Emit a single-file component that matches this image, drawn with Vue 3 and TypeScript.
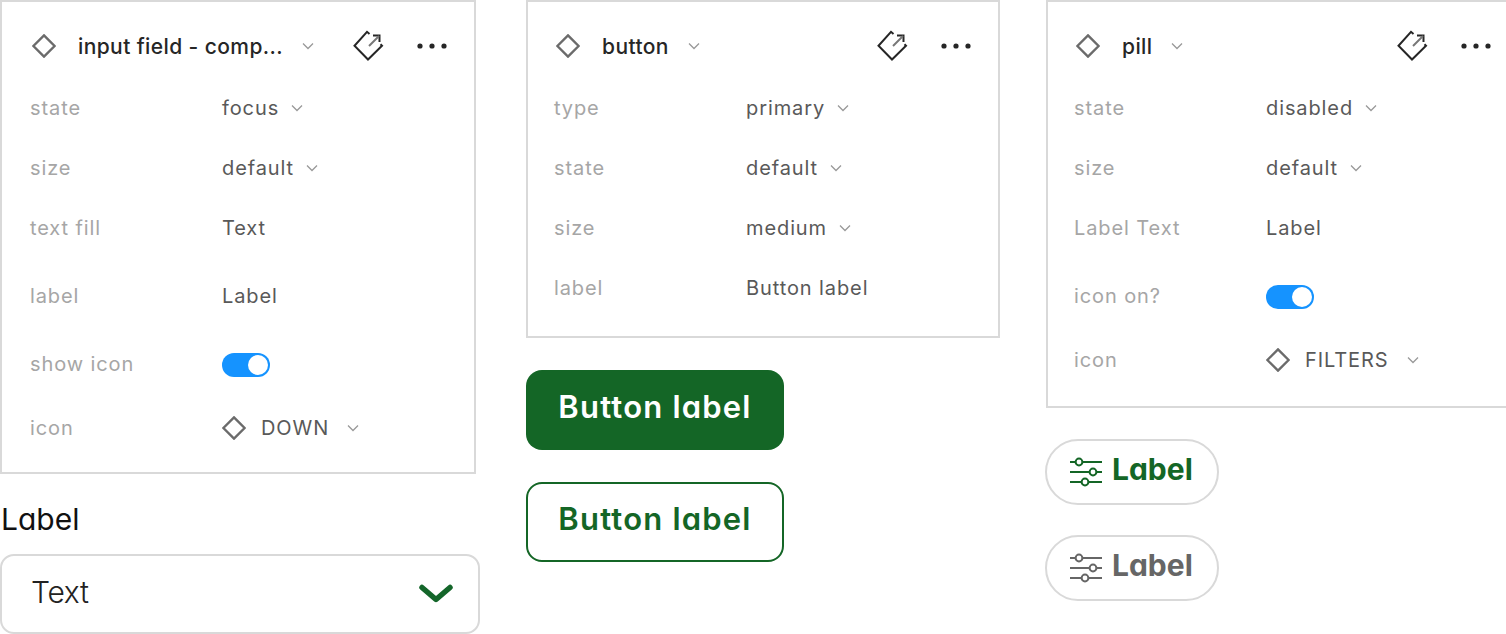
<script setup lang="ts">
interface Row {
  label: string;
  value?: string;
  kind: 'select' | 'text' | 'toggle' | 'icon';
  h: number;
}

interface Panel {
  name: string;
  cls: string;
  rows: Row[];
}

const panels: Panel[] = [
  {
    name: 'input field - comp...',
    cls: 'panel-input',
    rows: [
      { label: 'state', value: 'focus', kind: 'select', h: 60 },
      { label: 'size', value: 'default', kind: 'select', h: 60 },
      { label: 'text fill', value: 'Text', kind: 'text', h: 60 },
      { label: 'label', value: 'Label', kind: 'text', h: 76 },
      { label: 'show icon', kind: 'toggle', h: 60 },
      { label: 'icon', value: 'DOWN', kind: 'icon', h: 68 }
    ]
  },
  {
    name: 'button',
    cls: 'panel-button',
    rows: [
      { label: 'type', value: 'primary', kind: 'select', h: 60 },
      { label: 'state', value: 'default', kind: 'select', h: 60 },
      { label: 'size', value: 'medium', kind: 'select', h: 60 },
      { label: 'label', value: 'Button label', kind: 'text', h: 60 }
    ]
  },
  {
    name: 'pill',
    cls: 'panel-pill',
    rows: [
      { label: 'state', value: 'disabled', kind: 'select', h: 60 },
      { label: 'size', value: 'default', kind: 'select', h: 60 },
      { label: 'Label Text', value: 'Label', kind: 'text', h: 60 },
      { label: 'icon on?', kind: 'toggle', h: 76 },
      { label: 'icon', value: 'FILTERS', kind: 'icon', h: 52 }
    ]
  }
];

const sliders = [
  { y: 5, cx: 9 },
  { y: 15, cx: 23 },
  { y: 25, cx: 15 }
];
</script>

<template>
  <div class="page">
    <template v-for="(panel, i) in panels" :key="panel.name">
      <div class="column">
        <section class="panel" :class="panel.cls">
          <header class="panel-head">
            <svg class="diamond" viewBox="0 0 24 24">
              <path d="M12 1.4 22.6 12 12 22.6 1.4 12Z" />
            </svg>
            <span class="panel-name">{{ panel.name }}</span>
            <svg class="chevron head-chevron" viewBox="0 0 12 8">
              <path d="M1 1.5 6 6.5 11 1.5" />
            </svg>
            <span class="spacer"></span>
            <svg class="tag" viewBox="0 0 34 34">
              <path class="tag-line" d="M17.5 5 15 2.8 2.5 16.8 16 30.5 30 16.8 28.5 15.3" />
              <path class="tag-line" d="M21 6.5H27.5V13" />
              <path class="tag-tail" d="M27 7 17 17" />
            </svg>
            <svg class="dots" viewBox="0 0 32 6">
              <circle cx="4" cy="3" r="2.6" />
              <circle cx="16" cy="3" r="2.6" />
              <circle cx="28" cy="3" r="2.6" />
            </svg>
          </header>

          <div v-for="row in panel.rows" :key="row.label" class="row" :style="{ height: row.h + 'px' }">
            <span class="row-label">{{ row.label }}</span>
            <div class="row-value">
              <span v-if="row.kind === 'toggle'" class="toggle"><span class="knob"></span></span>
              <template v-else>
                <svg v-if="row.kind === 'icon'" class="diamond value-diamond" viewBox="0 0 24 24">
                  <path d="M12 1.4 22.6 12 12 22.6 1.4 12Z" />
                </svg>
                <span class="value-text" :class="{ caps: row.kind === 'icon' }">{{ row.value }}</span>
                <svg v-if="row.kind !== 'text'" class="chevron" viewBox="0 0 12 8">
                  <path d="M1 1.5 6 6.5 11 1.5" />
                </svg>
              </template>
            </div>
          </div>
        </section>

        <template v-if="i === 0">
          <label class="field-label">Label</label>
          <div class="field">
            <span class="field-text">Text</span>
            <svg class="field-chevron" viewBox="0 0 34 20">
              <path d="M3 3.5 17 15.5 31 3.5" />
            </svg>
          </div>
        </template>

        <template v-if="i === 1">
          <button class="btn btn-primary">Button label</button>
          <button class="btn btn-outline">Button label</button>
        </template>

        <template v-if="i === 2">
          <div v-for="c in ['pill-active', 'pill-disabled']" :key="c" class="pill" :class="c">
            <svg class="sliders" viewBox="0 0 32 30">
              <g v-for="s in sliders" :key="s.y">
                <path :d="`M0 ${s.y}H32`" />
                <circle :cx="s.cx" :cy="s.y" r="3.4" />
              </g>
            </svg>
            <span>Label</span>
          </div>
        </template>
      </div>
    </template>
  </div>
</template>

<style>
html,
body {
  margin: 0;
  background: #fff;
  overflow: hidden;
}
</style>

<style scoped>
.page {
  display: flex;
  gap: 46px;
  width: 1506px;
  height: 634px;
  overflow: hidden;
  font-family: Inter, 'Liberation Sans', sans-serif;
}

.column {
  flex: none;
  display: flex;
  flex-direction: column;
  align-items: flex-start;
  width: 474px;
}

.column:first-child {
  width: 480px;
}

.panel {
  box-sizing: border-box;
  width: 474px;
  padding-left: 26px;
  padding-right: 26px;
  border: 2px solid #d9d9d9;
}

.panel-input {
  width: 476px;
  height: 474px;
  padding-left: 28px;
}

.panel-button {
  height: 338px;
}

.panel-pill {
  height: 408px;
}

.panel-head {
  box-sizing: border-box;
  display: flex;
  align-items: center;
  height: 76px;
  padding-top: 12px;
}

.diamond {
  flex: none;
  width: 24px;
  height: 24px;
  margin-left: 2px;
}

.diamond path {
  fill: none;
  stroke: #6b6b6b;
  stroke-width: 2.4;
}

.panel-name {
  margin-left: 22px;
  font-size: 21px;
  font-weight: 500;
  letter-spacing: 0.4px;
  color: #262626;
  white-space: nowrap;
}

.chevron {
  flex: none;
  width: 12px;
  height: 8px;
  margin-left: 12px;
}

.chevron path {
  fill: none;
  stroke: #999;
  stroke-width: 1.3;
}

.head-chevron {
  margin-left: 19px;
}

.spacer {
  flex: 1;
}

.tag {
  flex: none;
  width: 34px;
  height: 34px;
  margin-right: 30px;
}

.tag-line {
  fill: none;
  stroke: #262626;
  stroke-width: 2;
}

.tag-tail {
  fill: none;
  stroke: #777;
  stroke-width: 2;
}

.dots {
  flex: none;
  width: 32px;
  height: 6px;
  fill: #262626;
}

.row {
  display: flex;
  align-items: center;
}

.row-label {
  flex: none;
  width: 192px;
  font-size: 20px;
  letter-spacing: 0.9px;
  color: #a6a6a6;
}

.row-value {
  display: flex;
  align-items: center;
  font-size: 20px;
  letter-spacing: 0.9px;
  color: #595959;
}

.value-diamond {
  margin-left: 0;
}

.caps {
  margin-left: 15px;
}

.caps + .chevron {
  margin-left: 18px;
}

.toggle {
  display: flex;
  justify-content: flex-end;
  align-items: center;
  box-sizing: border-box;
  width: 48px;
  height: 24px;
  margin-top: 2px;
  padding: 2px;
  border-radius: 12px;
  background: #1593ff;
}

.knob {
  width: 20px;
  height: 20px;
  border-radius: 50%;
  background: #fff;
}

.field-label {
  box-sizing: border-box;
  display: flex;
  align-items: center;
  height: 80px;
  padding: 10px 0 0 1px;
  font-size: 30px;
  font-weight: 400;
  font-feature-settings: 'cv11';
  color: #111;
}

.field {
  box-sizing: border-box;
  display: flex;
  align-items: center;
  justify-content: space-between;
  width: 480px;
  height: 80px;
  padding: 0 25px 0 29px;
  border: 2px solid #d9d9d9;
  border-radius: 14px;
}

.field-text {
  padding-bottom: 5px;
  font-size: 30px;
  font-weight: 300;
  letter-spacing: -0.3px;
  font-feature-settings: 'cv11';
  color: #222;
}

.field-chevron {
  width: 34px;
  height: 20px;
}

.field-chevron path {
  fill: none;
  stroke: #14662a;
  stroke-width: 5.5;
  stroke-linecap: round;
  stroke-linejoin: round;
}

.btn {
  box-sizing: border-box;
  width: 258px;
  height: 80px;
  margin-top: 32px;
  padding-bottom: 8px;
  border-radius: 16px;
  font-family: Inter, sans-serif;
  font-size: 31px;
  font-weight: 600;
  letter-spacing: 1.2px;
  font-feature-settings: 'cv11';
}

.btn-primary {
  border: none;
  background: #146626;
  color: #fff;
}

.btn-outline {
  border: 2px solid #146626;
  background: #fff;
  color: #146626;
}

.pill {
  box-sizing: border-box;
  display: flex;
  align-items: center;
  gap: 10px;
  width: 174px;
  height: 66px;
  margin-top: 30px;
  margin-left: -1px;
  padding-left: 23px;
  border: 2px solid #d9d9d9;
  border-radius: 33px;
  font-size: 30px;
  font-weight: 700;
  font-feature-settings: 'cv11';
}

.pill span {
  padding-bottom: 6px;
}

.pill-active {
  margin-top: 31px;
  color: #146626;
}

.pill-disabled {
  color: #666;
}

.sliders {
  flex: none;
  width: 32px;
  height: 30px;
}

.sliders path {
  stroke: currentColor;
  stroke-width: 2;
}

.sliders circle {
  fill: #fff;
  stroke: currentColor;
  stroke-width: 2;
}
</style>
